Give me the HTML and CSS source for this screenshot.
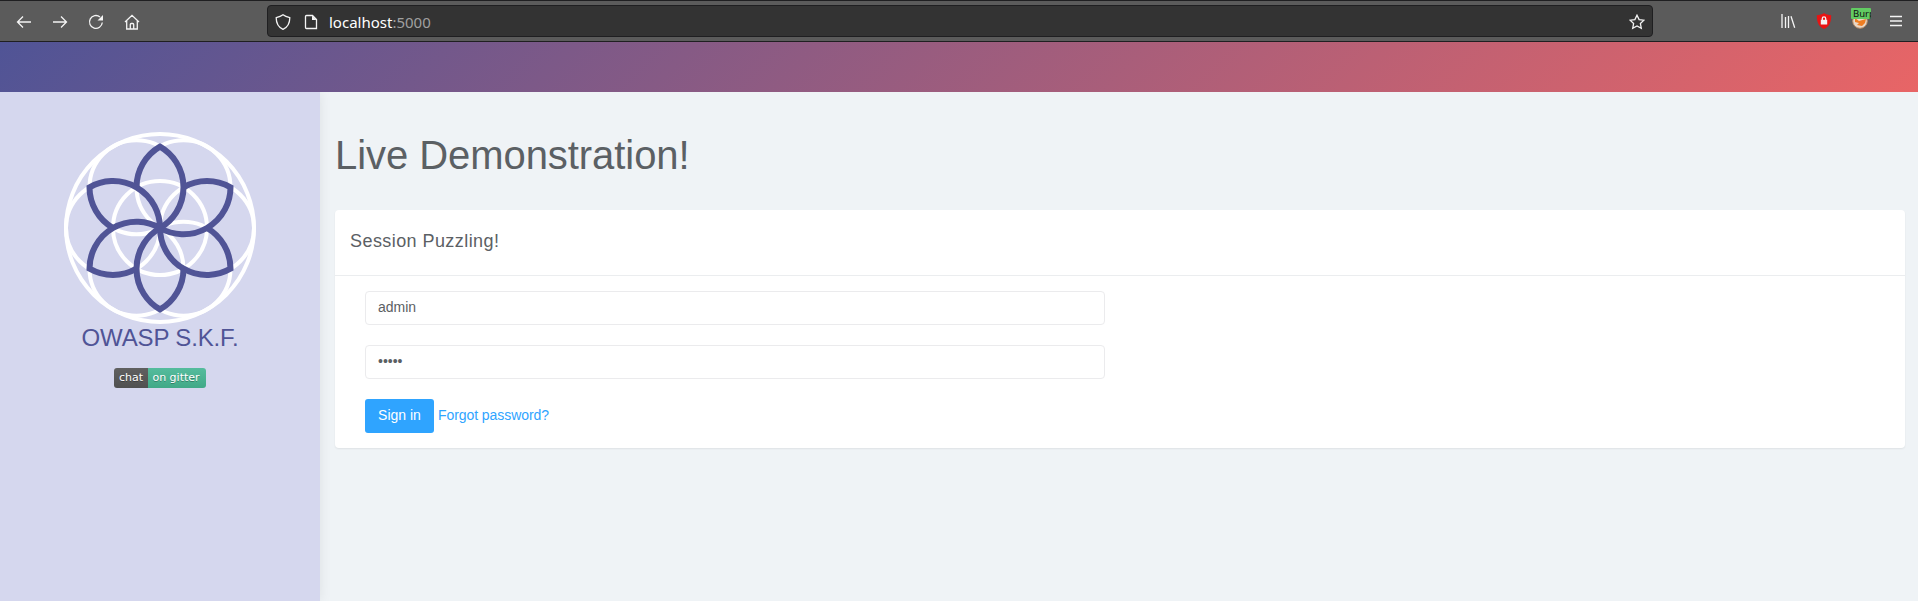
FILE: index.html
```html
<!DOCTYPE html>
<html lang="en">
<head>
<meta charset="utf-8">
<title>Session Puzzling</title>
<link rel="stylesheet" href="styles.css">
</head>
<body>
<div class="toolbar">
  <div class="nav">
    <svg class="icon" viewBox="0 0 16 16"><path d="M15 8H1.500M7 2.500L1.500 8L7 13.500"/></svg>
    <svg class="icon" viewBox="0 0 16 16"><path d="M1 8h13.500M9 2.500L14.500 8L9 13.500"/></svg>
    <svg class="icon" viewBox="0 0 16 16"><path d="M14.300 8.500A6.400 6.400 0 1 1 12 3"/><path class="solid" d="M15 1v5.500H9.500z"/></svg>
    <svg class="icon" viewBox="0 0 16 16"><path d="M1 8L8 1.300L15 8M2.700 7v8h10.600V7M6.300 15v-4.500a1 1 0 0 1 1-1h1.400a1 1 0 0 1 1 1V15"/></svg>
  </div>
  <div class="urlbar">
    <svg class="icon" viewBox="0 0 16 16"><path d="M8 .8C6 2.300 4 3 1.200 3.700C1.200 9 3 13 8 15.300C13 13 14.800 9 14.800 3.700C12 3 10 2.300 8 .8z"/></svg>
    <svg class="icon page" viewBox="0 0 16 16"><path d="M3.500 1.500h6l4 4v9h-10a1 1 0 0 1-1-1v-11a1 1 0 0 1 1-1z"/><path class="solid" d="M9 1.500v4.500h4.500z"/></svg>
    <span class="url">localhost<span class="port">:5000</span></span>
    <svg class="icon star" viewBox="0 0 16 16"><path d="M8 1.200l2.100 4.400l4.800.6l-3.500 3.300l.9 4.800L8 12l-4.300 2.300l.9-4.800L1.100 6.200l4.800-.6z"/></svg>
  </div>
  <div class="tools">
    <svg class="icon" viewBox="0 0 16 16"><path d="M2 1v14M5.500 4v11M8.500 3v12M11 3.200l3.700 11.600"/></svg>
    <svg class="icon lock" viewBox="0 0 16 16"><path class="shield" d="M8 0C6 1.500 3.500 2 .8 2.200C.8 9 2.500 13.500 8 16C13.500 13.500 15.200 9 15.200 2.200C12.500 2 10 1.500 8 0z"/><path d="M6.300 7V5.500a1.700 1.700 0 0 1 3.400 0V7"/><path class="solid" d="M4.800 6.800h6.400v4.700H4.800z"/></svg>
    <div class="proxy">
      <svg class="icon" viewBox="0 0 16 16"><circle class="globe" cx="8" cy="8" r="7.300"/><path class="fox" d="M3 5l4 3l7-2l-1 4l-3 3l-5-1l2-2l-4-1z"/></svg>
      <span class="tag">Burp</span>
    </div>
    <svg class="icon" viewBox="0 0 16 16"><path d="M2 3.500h12M2 8h12M2 12.500h12"/></svg>
  </div>
</div>
<header class="banner"></header>
<div class="layout">
  <aside class="sidebar">
    <svg class="logo" viewBox="-96 -96 192 192">
      <defs>
        <path id="petal" d="M-23.500 -40.700A47 47 0 0 1 0 -81.400A47 47 0 0 1 0 0"/>
      </defs>
      <g class="rings">
        <circle r="94"/><circle r="47"/>
        <circle cx="47" r="47"/><circle cx="-47" r="47"/>
        <circle cx="23.500" cy="-40.700" r="47"/><circle cx="-23.500" cy="-40.700" r="47"/>
        <circle cx="23.500" cy="40.700" r="47"/><circle cx="-23.500" cy="40.700" r="47"/>
      </g>
      <g class="petals">
        <use href="#petal"/><use href="#petal" transform="rotate(60)"/><use href="#petal" transform="rotate(120)"/>
        <use href="#petal" transform="rotate(180)"/><use href="#petal" transform="rotate(240)"/><use href="#petal" transform="rotate(300)"/>
      </g>
    </svg>
    <div class="brand">OWASP S.K.F.</div>
    <div class="badge"><span class="chat">chat</span><span class="gitter">on gitter</span></div>
  </aside>
  <main class="content">
    <h1 class="title">Live Demonstration!</h1>
    <section class="card">
      <div class="card-head">Session Puzzling!</div>
      <form class="card-body">
        <input class="field" type="text" value="admin">
        <input class="field" type="password" value="admin">
        <div class="actions"><button class="signin" type="button">Sign in</button><a class="forgot">Forgot password?</a></div>
      </form>
    </section>
  </main>
</div>
</body>
</html>
```
FILE: styles.css
```css
* { box-sizing: border-box; }
body { margin: 0; height: 601px; overflow: hidden; display: flex; flex-direction: column; background: #eff3f6; font-family: "Liberation Sans", Arial, sans-serif; font-size: 14px; color: #5b6064; }
.toolbar { height: 42px; flex: none; display: flex; align-items: center; background: #5b5b5b; border-top: 1px solid #1f1f21; border-bottom: 1px solid #1f1f21; }
.icon { width: 16px; height: 16px; flex: none; display: block; fill: none; stroke: #f4f4f4; stroke-width: 1.3; }
.icon .solid { fill: #f4f4f4; stroke: none; }
.nav { width: 267px; padding: 1px 0 0 16px; display: flex; gap: 20px; }
.urlbar { width: 1386px; height: 32px; padding: 1px 7px 0; display: flex; align-items: center; background: #333; border: 1px solid #1f1f21; border-radius: 4px; }
.page { margin-left: 12px; }
.url { margin-left: 10px; font-family: "Noto Sans", sans-serif; font-size: 15px; color: #fff; }
.port { color: #a0a0a0; }
.star { margin-left: auto; }
.tools { margin-left: 127px; display: flex; gap: 20px; align-items: center; }
.lock .shield { fill: #e81414; stroke: none; }
.proxy { position: relative; }
.proxy .globe { fill: #e8d8c8; stroke: #b98b65; stroke-width: 1; }
.proxy .fox { fill: #ef7d22; stroke: none; }
.tag { position: absolute; left: -1px; top: -5px; width: 20px; height: 11px; overflow: hidden; padding-left: 2px; background: #62cb62; border-radius: 1px; color: #111; font: 9.5px/11px "Noto Sans", sans-serif; }
.banner { height: 50px; flex: none; background: linear-gradient(135deg, #505496 0%, #e86566 100%); }
.layout { flex: 1; display: flex; }
.sidebar { width: 320px; flex: none; padding-top: 40px; display: flex; flex-direction: column; align-items: center; background: #d5d7ee; box-shadow: 0 0 12px rgba(0,0,0,.08); clip-path: inset(0 -20px 0 0); }
.logo { width: 192px; height: 192px; display: block; fill: none; }
.rings { stroke: #fff; stroke-width: 4; }
.petals { stroke: #505496; stroke-width: 6; }
.brand { font-size: 24px; line-height: 28px; letter-spacing: -.15px; color: #505496; }
.badge { margin-top: 16px; height: 20px; display: flex; border-radius: 3px; overflow: hidden; font: 11px/20px "DejaVu Sans", sans-serif; color: #fff; text-shadow: 0 1px rgba(1,1,1,.3); }
.chat { width: 34px; text-align: center; background: linear-gradient(#606060, #505050); }
.gitter { width: 58px; padding-right: 2px; text-align: center; background: linear-gradient(#55bc9d, #41a987); }
.content { flex: 1; padding: 38px 13px 0 15px; }
.title { margin: 0 0 30px; height: 50px; font-size: 40px; line-height: 50px; letter-spacing: -.06px; font-weight: 400; }
.card { height: 238px; background: #fff; border-radius: 4px; box-shadow: 0 1px 2px rgba(0,0,0,.07); }
.card-head { height: 66px; padding: 0 15px; line-height: 62px; font-size: 18px; letter-spacing: .43px; border-bottom: 1px solid #ebedef; }
.card-body { padding: 15px 30px; display: flex; flex-direction: column; align-items: flex-start; gap: 20px; }
.field { width: 740px; height: 34px; padding: 0 12px 2px; border: 1px solid #ebebed; border-radius: 4px; background: #fff; font: 14px "Liberation Sans", Arial, sans-serif; color: #5b6064; }
.actions { display: flex; align-items: center; gap: 4px; }
.signin { width: 69px; height: 34px; padding: 0 0 2px; border: 0; border-radius: 3px; background: #2fa4ff; color: #fff; font: 14px "Liberation Sans", Arial, sans-serif; }
.forgot { padding-bottom: 2px; letter-spacing: -.07px; color: #2fa4ff; }
```
